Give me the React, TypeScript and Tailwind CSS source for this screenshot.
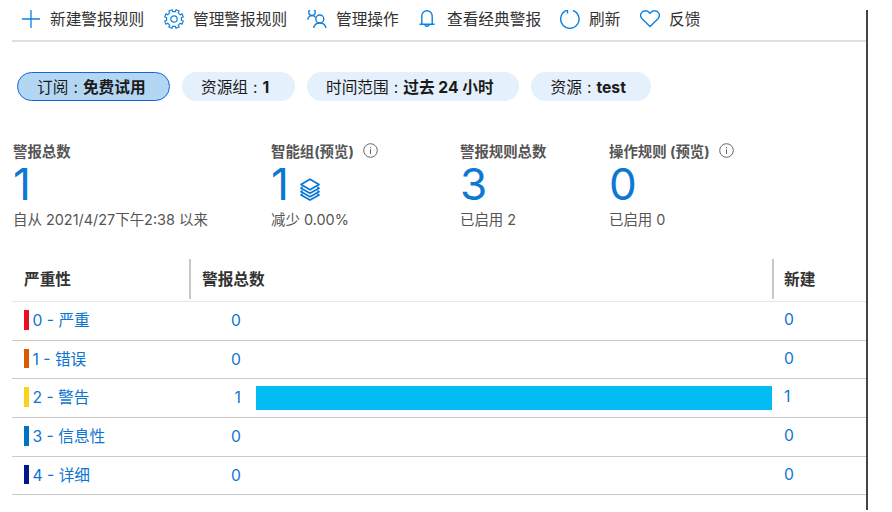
import React from "react";

type IconProps = { className?: string };

function PlusIcon({ className }: IconProps) {
  return (
    <svg viewBox="0 0 18 18" className={className} fill="none" stroke="#1080dc" strokeWidth="1.3">
      <path d="M9 0v18M0 9h18" />
    </svg>
  );
}

function GearIcon({ className }: IconProps) {
  return (
    <svg viewBox="0 0 20 20" className={className} fill="none" stroke="#1080dc" strokeWidth="1.2" strokeLinejoin="round">
      <path d="M8 .7 8.500 2.600H11.500L12 .7 15.200 2 14.200 3.700 16.300 5.800 18 4.800 19.300 8 17.400 8.500V11.500L19.300 12 18 15.200 16.300 14.200 14.200 16.300 15.200 18 12 19.300 11.500 17.400H8.500L8 19.300 4.800 18 5.800 16.300 3.700 14.200 2 15.200 .7 12 2.600 11.500V8.500L.7 8 2 4.800 3.700 5.800 5.800 3.700 4.800 2z" />
      <circle cx="10" cy="10" r="3.200" />
    </svg>
  );
}

function PeopleIcon({ className }: IconProps) {
  return (
    <svg viewBox="0 0 20 18" className={className} fill="none" stroke="#1080dc" strokeWidth="1.4">
      <circle cx="5" cy="2.300" r="3.200" />
      <path d="M.8 9.700C1.200 6.800 3 5.600 5 5.600c1.600 0 2.800.6 3.600 1.700" />
      <circle cx="12.800" cy="9" r="4" />
      <path d="M6.600 18.300c.5-3.300 3-5.300 6.200-5.300s5.700 2 6.200 5.300" />
    </svg>
  );
}

function BellIcon({ className }: IconProps) {
  return (
    <svg viewBox="0 0 16 18" className={className} fill="none" stroke="#1080dc" strokeWidth="1.4">
      <path d="M.5 14.200h15M2.800 14.200V5.900a5.200 5.200 0 0 1 10.400 0v8.300M6 14.200a2 2 0 0 0 4 0" />
    </svg>
  );
}

function RefreshIcon({ className }: IconProps) {
  return (
    <svg viewBox="0 0 20 19" className={className} fill="none" stroke="#1080dc" strokeWidth="1.400">
      <path d="M13 .5A9.200 9.200 0 1 1 5.200 1.200M4.800.5h2.700v3" />
    </svg>
  );
}

function HeartIcon({ className }: IconProps) {
  return (
    <svg viewBox="0 0 20 18" className={className} fill="none" stroke="#1080dc" strokeWidth="1.400">
      <path d="M10 16.600 2 8.700C-1.400 4.800 2 .7 5.500.7 7.700.7 9 2 10 3.300 11 2 12.300.7 14.500.7 18 .7 21.400 4.800 18 8.700z" />
    </svg>
  );
}

function InfoIcon({ className }: IconProps) {
  return (
    <svg viewBox="0 0 15 15" className={className} fill="none" stroke="#666" strokeWidth="1">
      <circle cx="7.500" cy="7.500" r="6.800" />
      <path d="M7.500 6.300v4.700M7.500 4v1.200" />
    </svg>
  );
}

function LayersIcon({ className }: IconProps) {
  return (
    <svg viewBox="0 0 20 23" className={className} fill="none" stroke="#0a78d4" strokeWidth="1.700" strokeLinejoin="round">
      <path d="M10 1.200 19 6.500 10 11.800 1 6.500zM2.500 9 1 10.300l9 5 9-5L17.500 9M2.500 12.600 1 13.700l9 5 9-5-1.500-1.100M2.500 15.900 1 17.100l9 5 9-5-1.500-1.200" />
    </svg>
  );
}

const severities = [
  { label: "0 - 严重", color: "bg-[#e81123]", count: 0 },
  { label: "1 - 错误", color: "bg-[#db5700]", count: 0 },
  { label: "2 - 警告", color: "bg-[#fcd116]", count: 1 },
  { label: "3 - 信息性", color: "bg-[#0072c6]", count: 0 },
  { label: "4 - 详细", color: "bg-[#00188f]", count: 0 },
];

function Command({ icon, label, className }: { icon: React.ReactNode; label: string; className: string }) {
  return (
    <div className={`flex h-[18px] shrink-0 items-center ${className}`}>
      {icon}
      <span className="pt-0.5">{label}</span>
    </div>
  );
}

function Pill({ name, value, className }: { name: string; value: string; className: string }) {
  return (
    <div className={`flex h-[29px] shrink-0 items-center rounded-full text-[#1b1b1b] ${className}`}>
      <span className="whitespace-pre pt-0.5">
        {name}
        <span className="pr-[5px] pl-[5px]">:</span>
        <b>{value}</b>
      </span>
    </div>
  );
}

function Stat({ title, value, note, info, layers, className }: { title: string; value: string; note: string; info?: boolean; layers?: boolean; className: string }) {
  return (
    <div className={`flex shrink-0 flex-col ${className}`}>
      <div className="flex h-5 items-center gap-[9px] text-[14.400px] font-bold">
        <span className="pt-0.5">{title}</span>
        {info && <InfoIcon className="-mt-0.5 size-[15px]" />}
      </div>
      <div className="flex h-[47px] items-center text-[44px] leading-[47px] text-[#0a78d4]">
        {value}
        {layers && <LayersIcon className="mt-[9px] ml-[11px] h-[23px] w-5" />}
      </div>
      <div className="mt-px flex h-5 items-center pt-px whitespace-pre">{note}</div>
    </div>
  );
}

export default function App() {
  return (
    <div className="h-[512px] w-[892px] overflow-hidden bg-white pt-2.5 font-['Inter','Noto_Sans_CJK_SC',sans-serif] text-[15.700px] whitespace-nowrap">
      <div className="flex h-[500px] w-[868px] flex-col border-r-2 border-[#444] pl-3">
        <div className="flex h-8 items-start border-b-2 border-[#e0e0e0] pl-2.5 text-[#333]">
          <Command className="w-[142px] gap-2.5" icon={<PlusIcon className="size-[18px]" />} label="新建警报规则" />
          <Command className="w-[143px] gap-[9px]" icon={<GearIcon className="size-5" />} label="管理警报规则" />
          <Command className="w-[112px] gap-[9px]" icon={<PeopleIcon className="h-[18px] w-5" />} label="管理操作" />
          <Command className="w-[141px] gap-3" icon={<BellIcon className="h-[18px] w-4" />} label="查看经典警报" />
          <Command className="w-20 gap-[9px]" icon={<RefreshIcon className="h-[19px] w-5" />} label="刷新" />
          <Command className="gap-[9px]" icon={<HeartIcon className="h-[18px] w-5" />} label="反馈" />
        </div>

        <div className="mt-[30px] flex h-[29px] gap-3 pl-[5px]">
          <Pill className="w-[153px] border-[1.500px] border-[#1664dc] bg-[#b3d7f2] pl-[19px]" name="订阅" value="免费试用" />
          <Pill className="w-[113px] bg-[#e4f0fb] pl-[19px]" name="资源组" value="1" />
          <Pill className="w-[212px] bg-[#e4f0fb] pl-[19px]" name="时间范围" value="过去 24 小时" />
          <Pill className="w-[120px] bg-[#e4f0fb] pl-[19.500px]" name="资源" value="test" />
        </div>

        <div className="mt-10 flex h-[88px] pl-px text-[14.450px] text-[#555]">
          <Stat className="w-[258px]" title="警报总数" value="1" note="自从 2021/4/27下午2:38 以来" />
          <Stat className="w-[189px]" title="智能组(预览)" value="1" note="减少 0.00%" info layers />
          <Stat className="w-[149px]" title="警报规则总数" value="3" note="已启用 2" />
          <Stat className="w-[200px]" title="操作规则 (预览)" value="0" note="已启用 0" info />
        </div>

        <div className="mt-[30px] flex h-[43px] items-start border-b border-[#e6e6e6] font-bold text-[#333]">
          <div className="flex h-10 w-[177px] items-center pt-px pl-3">严重性</div>
          <div className="flex h-10 w-[583px] items-center border-l-2 border-[#c8c8c8] pt-px pl-[11px]">警报总数</div>
          <div className="flex h-10 items-center border-l-2 border-[#c8c8c8] pt-px pl-2.5">新建</div>
        </div>
        {severities.map((s) => (
          <div key={s.label} className="flex h-[38.700px] shrink-0 items-center border-b-[1.500px] border-[#cacaca] text-[#0c75d2]">
            <div className="flex w-[177px] items-center gap-[3.500px] pl-3">
              <span className={`-mt-0.5 h-[19.500px] w-[5px] ${s.color}`} />
              {s.label}
            </div>
            <div className="flex w-[583px] items-center">
              <span className="w-[52px] text-right">{s.count}</span>
              {s.count > 0 && <span className="-mt-px ml-[15px] h-6 w-[516px] bg-[#04bcf4]" />}
            </div>
            <div className="-mt-0.5 pl-3">{s.count}</div>
          </div>
        ))}
      </div>
    </div>
  );
}
